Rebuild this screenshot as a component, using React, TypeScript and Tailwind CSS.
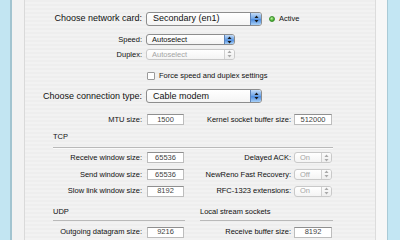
import React from "react";

const font = { fontFamily: '"Liberation Sans", Arial, sans-serif' };

function Arrows({ disabled }: { disabled?: boolean }) {
  const c = disabled ? "#a8a8a8" : "#1a1a1a";
  return (
    <svg width="5" height="8" viewBox="0 0 5 8">
      <path d="M2.5 0.5 L4.5 3 L0.5 3 Z" fill={c} />
      <path d="M2.5 7.5 L4.5 5 L0.5 5 Z" fill={c} />
    </svg>
  );
}

function Popup({
  text,
  w,
  big,
  disabled,
}: {
  text: string;
  w: string;
  big?: boolean;
  disabled?: boolean;
}) {
  return (
    <div
      className={`${w} ${big ? "h-[14px] text-[9px]" : "h-[11px] text-[7.5px]"} flex items-stretch rounded-[3px] border ${
        disabled ? "border-[#c9c9c9] text-[#a5a5a5]" : "border-[#8d8d8d] text-[#111]"
      } bg-[linear-gradient(#ffffff,#f4f4f4)] overflow-hidden`}
    >
      <div className={`flex-1 flex items-center ${big ? "pl-[6px]" : "pl-[5px]"} leading-none`}>{text}</div>
      <div
        className={`${big ? "w-[11px]" : "w-[10px]"} flex items-center justify-center border-l ${
          disabled
            ? "border-[#d0d0d0] bg-[linear-gradient(#fbfbfb,#eeeeee)]"
            : "border-[#5d82b6] bg-[linear-gradient(#c4dcf7,#6aa2e6_50%,#4f8ee0_55%,#a8d0f7)]"
        }`}
      >
        <Arrows disabled={disabled} />
      </div>
    </div>
  );
}

function Field({ value, w }: { value: string; w: string }) {
  return (
    <div
      className={`${w} h-[11px] bg-white border border-[#bdbdbd] border-t-[#8f8f8f] flex items-center justify-center text-[7.5px] text-[#444] leading-none`}
    >
      {value}
    </div>
  );
}

export default function App() {
  return (
    <div className="w-[400px] h-[240px] flex overflow-hidden bg-white" style={font}>
      <div className="w-[10px] bg-[#c2e5f2]" />
      <div className="w-[2px] bg-[#a2c4d0]" />
      <div className="w-[13px] bg-[#f2f2f2] border-r border-[#d9d9d9]" />
      <div className="w-[350px] bg-[repeating-linear-gradient(180deg,#eeeeee_0px,#eeeeee_2px,#f2f2f2_2px,#f2f2f2_4px)] flex flex-col text-[#111]">
        {/* network card */}
        <div className="mt-[11px] h-[16px] flex items-center">
          <div className="w-[117px] text-right text-[9px] leading-none">Choose network card:</div>
          <div className="ml-[4px]">
            <Popup text="Secondary (en1)" w="w-[116px]" big />
          </div>
          <div className="ml-[7px] w-[6px] h-[6px] rounded-full bg-[radial-gradient(circle_at_40%_35%,#bff0a0,#3fae2a_70%)] border border-[#3a8d2a]" />
          <div className="ml-[4px] text-[7.5px] leading-none">Active</div>
        </div>
        {/* speed */}
        <div className="mt-[6px] h-[15px] flex items-center">
          <div className="w-[117px] text-right text-[7.5px] leading-none">Speed:</div>
          <div className="ml-[4px]">
            <Popup text="Autoselect" w="w-[89px]" />
          </div>
        </div>
        {/* duplex */}
        <div className="h-[15px] flex items-center">
          <div className="w-[117px] text-right text-[7.5px] leading-none">Duplex:</div>
          <div className="ml-[4px]">
            <Popup text="Autoselect" w="w-[89px]" disabled />
          </div>
        </div>
        {/* checkbox */}
        <div className="mt-[6px] h-[16px] flex items-center">
          <div className="ml-[122px] w-[8px] h-[8px] bg-white border border-[#9a9a9a] rounded-[1px]" />
          <div className="ml-[4px] text-[7.5px] leading-none">Force speed and duplex settings</div>
        </div>
        {/* connection type */}
        <div className="mt-[4px] h-[18px] flex items-center">
          <div className="w-[117px] text-right text-[9px] leading-none">Choose connection type:</div>
          <div className="ml-[4px]">
            <Popup text="Cable modem" w="w-[116px]" big />
          </div>
        </div>
        {/* MTU */}
        <div className="mt-[8px] h-[14px] flex items-center">
          <div className="w-[117px] text-right text-[7.5px] leading-none">MTU size:</div>
          <div className="ml-[5px]">
            <Field value="1500" w="w-[37px]" />
          </div>
          <div className="w-[107px] text-right text-[7.5px] leading-none">Kernel socket buffer size:</div>
          <div className="ml-[3px]">
            <Field value="512000" w="w-[38px]" />
          </div>
        </div>
        {/* TCP header */}
        <div className="mt-[3px] h-[14px] flex items-center pl-[28px] text-[7.5px] leading-none">TCP</div>
        <div className="mt-[4px] ml-[28px] w-[280px] h-px bg-[#b9b9b9] shadow-[0_1px_0_#fafafa]" />
        {[
          ["Receive window size:", "65536", "Delayed ACK:", "On"],
          ["Send window size:", "65536", "NewReno Fast Recovery:", "Off"],
          ["Slow link window size:", "8192", "RFC-1323 extensions:", "On"],
        ].map(([l, v, rl, rv], i) => (
          <div key={l} className={`${i === 0 ? "mt-[2px]" : "mt-[1px]"} h-[16px] flex items-center`}>
            <div className="w-[117px] text-right text-[7.5px] leading-none">{l}</div>
            <div className="ml-[5px]">
              <Field value={v} w="w-[37px]" />
            </div>
            <div className="w-[107px] text-right text-[7.5px] leading-none">{rl}</div>
            <div className="ml-[3px]">
              <Popup text={rv} w="w-[38px]" disabled />
            </div>
          </div>
        ))}
        {/* UDP / Local headers */}
        <div className="mt-[6px] h-[14px] flex items-center text-[7.5px] leading-none">
          <div className="ml-[28px] w-[147px]">UDP</div>
          <div>Local stream sockets</div>
        </div>
        <div className="mt-[2px] h-px flex">
          <div className="ml-[28px] w-[132px] h-px bg-[#b9b9b9]" />
          <div className="ml-[15px] w-[133px] h-px bg-[#b9b9b9]" />
        </div>
        <div className="mt-[3px] h-[16px] flex items-center">
          <div className="w-[117px] text-right text-[7.5px] leading-none">Outgoing datagram size:</div>
          <div className="ml-[5px]">
            <Field value="9216" w="w-[37px]" />
          </div>
          <div className="w-[107px] text-right text-[7.5px] leading-none">Receive buffer size:</div>
          <div className="ml-[3px]">
            <Field value="8192" w="w-[38px]" />
          </div>
        </div>
      </div>
      <div className="w-[12px] bg-[#f7f7f7] border-l border-[#dcdcdc]" />
      <div className="w-px bg-[#a9cad6]" />
      <div className="flex-1 bg-[#c3e6f3]" />
    </div>
  );
}
